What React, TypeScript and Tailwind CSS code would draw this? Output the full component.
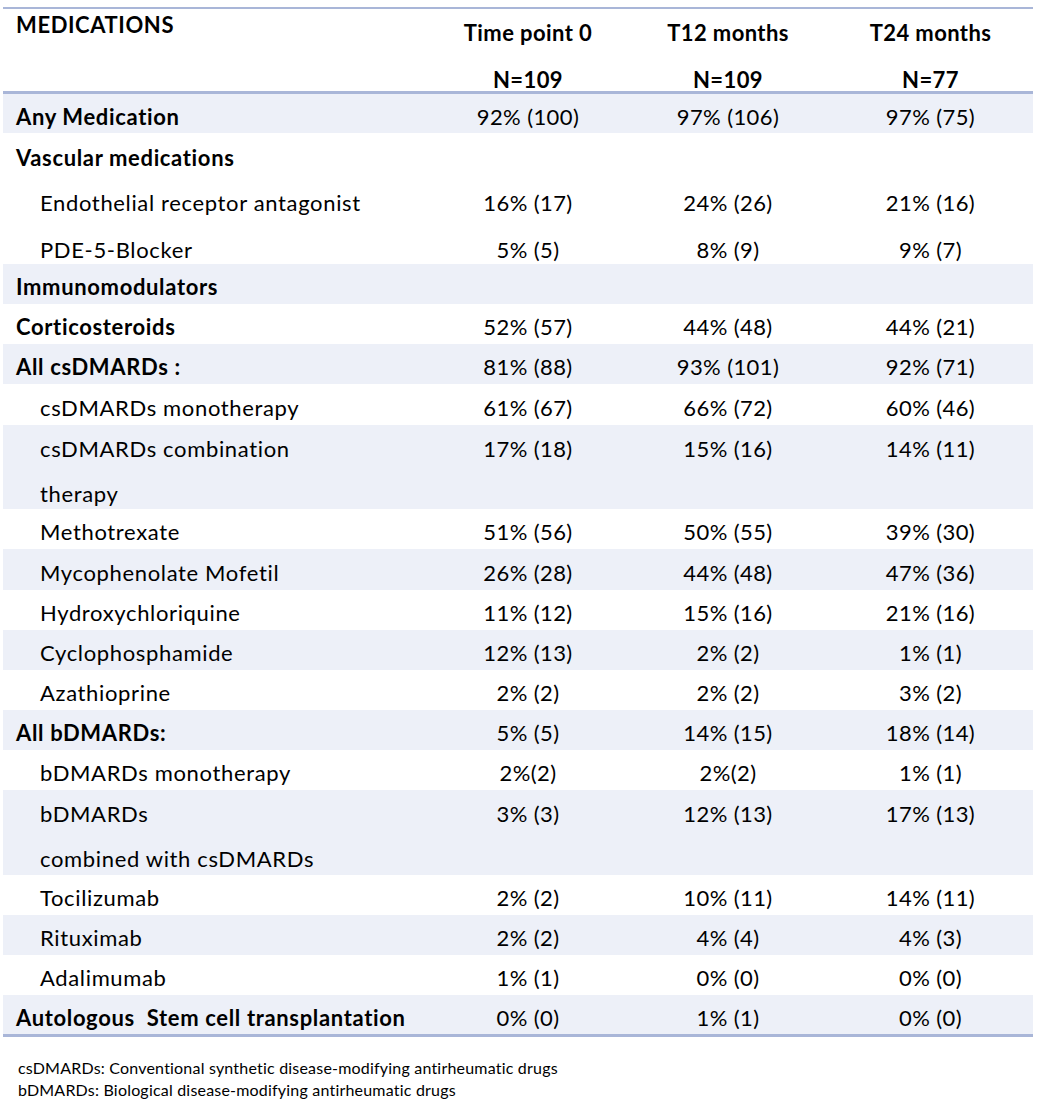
import React from "react";

type Row = {
  label: string;
  label2?: string;
  vals: [string, string, string];
  bold?: boolean;
  shaded?: boolean;
  h: string;
  pt?: string;
};

const rows: Row[] = [
  { label: "Any Medication", vals: ["92% (100)", "97% (106)", "97% (75)"], bold: true, shaded: true, h: "h-[39px]" },
  { label: "Vascular medications", vals: ["", "", ""], bold: true, h: "h-[43px]" },
  { label: "Endothelial receptor antagonist", vals: ["16% (17)", "24% (26)", "21% (16)"], h: "h-[47px]" },
  { label: "PDE-5-Blocker", vals: ["5% (5)", "8% (9)", "9% (7)"], h: "h-[41px]", pt: "pt-[12px]" },
  { label: "Immunomodulators", vals: ["", "", ""], bold: true, shaded: true, h: "h-[40px]" },
  { label: "Corticosteroids", vals: ["52% (57)", "44% (48)", "44% (21)"], bold: true, h: "h-[40px]" },
  { label: "All csDMARDs :", vals: ["81% (88)", "93% (101)", "92% (71)"], bold: true, shaded: true, h: "h-[40px]" },
  { label: "csDMARDs monotherapy", vals: ["61% (67)", "66% (72)", "60% (46)"], h: "h-[41px]" },
  { label: "csDMARDs combination", label2: "therapy", vals: ["17% (18)", "15% (16)", "14% (11)"], shaded: true, h: "h-[84px]" },
  { label: "Methotrexate", vals: ["51% (56)", "50% (55)", "39% (30)"], h: "h-[40px]" },
  { label: "Mycophenolate Mofetil", vals: ["26% (28)", "44% (48)", "47% (36)"], shaded: true, h: "h-[41px]" },
  { label: "Hydroxychloriquine", vals: ["11% (12)", "15% (16)", "21% (16)"], h: "h-[40px]" },
  { label: "Cyclophosphamide", vals: ["12% (13)", "2% (2)", "1% (1)"], shaded: true, h: "h-[40px]" },
  { label: "Azathioprine", vals: ["2% (2)", "2% (2)", "3% (2)"], h: "h-[40px]" },
  { label: "All bDMARDs:", vals: ["5% (5)", "14% (15)", "18% (14)"], bold: true, shaded: true, h: "h-[40px]" },
  { label: "bDMARDs monotherapy", vals: ["2%(2)", "2%(2)", "1% (1)"], h: "h-[40px]" },
  { label: "bDMARDs", label2: "combined with csDMARDs", vals: ["3% (3)", "12% (13)", "17% (13)"], shaded: true, h: "h-[85px]" },
  { label: "Tocilizumab", vals: ["2% (2)", "10% (11)", "14% (11)"], h: "h-[40px]" },
  { label: "Rituximab", vals: ["2% (2)", "4% (4)", "4% (3)"], shaded: true, h: "h-[40px]" },
  { label: "Adalimumab", vals: ["1% (1)", "0% (0)", "0% (0)"], h: "h-[40px]" },
  { label: "Autologous  Stem cell transplantation", vals: ["0% (0)", "1% (1)", "0% (0)"], bold: true, shaded: true, h: "h-[39px]" },
];

export default function App() {
  return (
    <div
      className="bg-white w-[1046px] h-[1118px] text-black pt-[7px]"
      style={{ fontFamily: "Lato, 'Open Sans', sans-serif" }}
    >
      <div className="ml-[3px] w-[1030px]">
        <div className="border-t-2 border-b-[3px] border-[#a9b6d8] h-[87px] flex text-[22px] tracking-[0.4px] font-bold">
          <div className="w-[425px] pl-[13px] pt-[1px] leading-[30px] tracking-[0.6px]">MEDICATIONS</div>
          {[
            ["Time point 0", "N=109"],
            ["T12 months", "N=109"],
            ["T24 months", "N=77"],
          ].map(([a, b], i) => (
            <div key={i} className={`${i === 2 ? "w-[205px]" : "w-[200px]"} flex flex-col items-center pt-[9px]`}>
              <div className="leading-[30px]">{a}</div>
              <div className="leading-[30px] mt-[17px]">{b}</div>
            </div>
          ))}
        </div>
        {rows.map((r, i) => (
          <div
            key={i}
            className={`flex text-[22px] tracking-[0.4px] ${r.h} ${r.shaded ? "bg-[#edf0f8]" : "bg-white"}`}
          >
            {r.label2 ? (
              <div className="w-[425px] pl-[37px] pt-[1px] whitespace-pre tracking-[0.65px]">
                <div className="leading-[45px]">{r.label}</div>
                <div className="leading-[45px]">{r.label2}</div>
              </div>
            ) : (
              <div
                className={`w-[425px] flex items-center ${r.pt ?? "pt-[6px]"} whitespace-pre tracking-[0.65px] ${
                  r.bold ? "font-bold pl-[13px]" : "pl-[37px]"
                }`}
              >
                <div className="leading-[30px]">{r.label}</div>
              </div>
            )}
            {r.vals.map((v, j) => (
              <div
                key={j}
                className={`${j === 2 ? "w-[205px]" : "w-[200px]"} flex justify-center ${
                  r.label2 ? "items-start pt-[9px]" : `items-center ${r.pt ?? "pt-[6px]"}`
                } leading-[30px]`}
              >
                {v}
              </div>
            ))}
          </div>
        ))}
        <div className="border-t-[3px] border-[#a9b6d8]" />
      </div>
      <div className="pl-[18px] pt-[20px] text-[16px] tracking-[0.2px] leading-[22px]">
        <div>csDMARDs: Conventional synthetic disease-modifying antirheumatic drugs</div>
        <div>bDMARDs: Biological disease-modifying antirheumatic drugs</div>
      </div>
    </div>
  );
}
